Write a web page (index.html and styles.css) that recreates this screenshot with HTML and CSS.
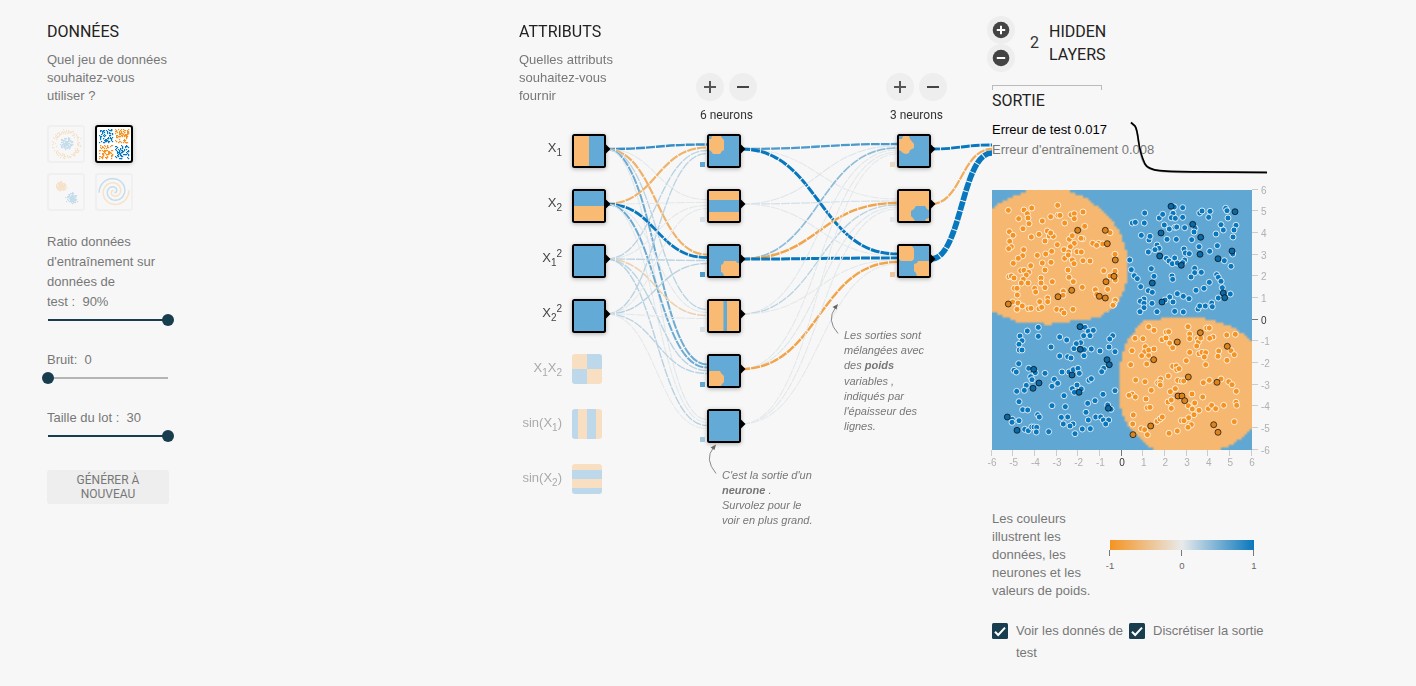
FILE: index.html
```html
<!DOCTYPE html>
<html lang="fr">
<head>
<meta charset="utf-8">
<title>Réseau de neurones</title>
<link rel="stylesheet" href="styles.css">
</head>
<body>
<main class="playground">
  <section class="data">
    <h4 class="title">Données</h4>
    <p class="intro">Quel jeu de données souhaitez-vous utiliser ?</p>
    <div class="datasets">
      <svg class="dataset" id="set-circle" viewBox="0 0 34 34"></svg>
      <svg class="dataset selected" id="set-xor" viewBox="0 0 34 34"></svg>
      <svg class="dataset" id="set-gauss" viewBox="0 0 34 34"></svg>
      <svg class="dataset" id="set-spiral" viewBox="0 0 34 34"></svg>
    </div>
    <div class="control ratio">
      <label>Ratio données d'entraînement sur données de<br>test&nbsp;:&nbsp; 90%</label>
      <div class="slider full"><span class="thumb"></span></div>
    </div>
    <div class="control noise">
      <label>Bruit:&nbsp; 0</label>
      <div class="slider"><span class="thumb"></span></div>
    </div>
    <div class="control batch">
      <label>Taille du lot&nbsp;:&nbsp; 30</label>
      <div class="slider full"><span class="thumb"></span></div>
    </div>
    <button class="regenerate">Générer à nouveau</button>
  </section>

  <section class="features">
    <h4 class="title">Attributs</h4>
    <p class="intro">Quelles attributs souhaitez-vous fournir</p>
    <div class="network">
      <svg id="net" width="473" height="530" viewBox="519 0 473 530"></svg>
      <div class="layer-controls first">
        <div class="buttons"><span class="round plus"></span><span class="round minus"></span></div>
        <div class="count">6 neurons</div>
      </div>
      <div class="layer-controls second">
        <div class="buttons"><span class="round plus"></span><span class="round minus"></span></div>
        <div class="count">3 neurons</div>
      </div>
      <p class="callout weights">Les sorties sont mélangées avec des <b>poids</b> variables&nbsp;, indiqués par l'épaisseur des lignes.</p>
      <p class="callout neuron">C'est la sortie d'un <b>neurone</b>&nbsp;.<br>Survolez pour le voir en plus grand.</p>
    </div>
  </section>

  <section class="output">
    <div class="layers">
      <div class="layer-buttons">
        <svg class="layer-button" viewBox="0 0 28 28"><circle cx="14" cy="14" r="8.3"/><path d="M9.8 14h8.4M14 9.8v8.4"/></svg>
        <svg class="layer-button" viewBox="0 0 28 28"><circle cx="14" cy="14" r="8.3"/><path d="M9.8 14h8.4"/></svg>
      </div>
      <span class="layer-count">2</span>
      <span class="layer-label">Hidden layers</span>
    </div>
    <div class="bracket"></div>
    <h4 class="title">Sortie</h4>
    <div class="metrics">
      <div class="errors">
        <div class="test">Erreur de test 0.017</div>
        <div class="train">Erreur d'entraînement 0.008</div>
      </div>
      <svg class="linechart" width="138" height="56" viewBox="1130 120 138 56">
        <path class="train-line" d="M1131 122.5L1135 126Q1137 129 1139 145T1146 166Q1149 170 1162 171.3T1200 172.3L1267 172.9"/>
        <path class="test-line" d="M1131 122.5L1135 126Q1137 129 1138.500 141T1145 164Q1148 169.500 1160 170.600T1200 171.8L1267 172.3"/>
      </svg>
    </div>
    <div class="heatmap">
      <canvas id="heat" width="100" height="100"></canvas>
      <svg id="points" width="285" height="285" viewBox="-5 0 285 285"></svg>
    </div>
    <div class="legend">
      <p>Les couleurs illustrent les données, les neurones et les valeurs de poids.</p>
      <div class="scale">
        <div class="gradient"></div>
        <div class="ticks"><i></i><i></i><i></i></div>
        <div class="values"><span>-1</span><span>0</span><span>1</span></div>
      </div>
    </div>
    <div class="options">
      <svg class="check" viewBox="0 0 16 16"><rect width="16" height="16" rx="1.5"/><path d="M3 8.700L6.200 12L13 4.600"/></svg>
      <span class="show-test">Voir les donnés de test</span>
      <svg class="check" viewBox="0 0 16 16"><rect width="16" height="16" rx="1.5"/><path d="M3 8.700L6.200 12L13 4.600"/></svg>
      <span class="discretize">Discrétiser la sortie</span>
    </div>
  </section>
</main>
<script src="main.js"></script>
</body>
</html>
```
FILE: styles.css
```css
body { margin: 0; background: #f7f7f7; color: #777; font: 13px/18px "Liberation Sans", Arial, sans-serif; }
p { margin: 0; }
.playground { display: flex; height: 686px; box-sizing: border-box; padding: 20px 0 0 47px; overflow: hidden; }
.title { margin: 0; font: 400 16px/23px Roboto, sans-serif; color: #222; text-transform: uppercase; }
.data { width: 122px; margin-right: 350px; flex: none; }
.intro { width: 122px; margin-top: 8px; }
.features { width: 473px; flex: none; position: relative; }
.features .intro { width: 100px; }

.datasets { display: grid; grid-template-columns: 38px 38px; gap: 10px; margin-top: 20px; }
.dataset { width: 34px; height: 34px; border: 2px solid #d8d8d8; border-radius: 3px; opacity: .2; }
.dataset.selected { opacity: 1; border-color: #000; background: #fff; box-shadow: 0 1px 5px rgba(0,0,0,.2); }

.control label { display: block; line-height: 20px; }
.ratio { margin-top: 21px; }
.noise { margin-top: 23px; }
.batch { margin-top: 23px; }
.slider { height: 15px; width: 120px; margin-left: 1px; display: flex; align-items: center; background: linear-gradient(#b5b5b5, #b5b5b5) left 0 top 7px / 100% 2px no-repeat; }
.slider.full { justify-content: flex-end; background-image: linear-gradient(#183d4e, #183d4e); }
.thumb { width: 12px; height: 12px; margin: 1px -6px 0; border-radius: 50%; background: #183d4e; }
.regenerate { display: block; width: 122px; height: 34px; margin-top: 27px; padding: 0 16px; border: 0; border-radius: 3px; background: #eee; color: #777; font: 400 12px/14px Roboto, sans-serif; text-transform: uppercase; }

.network { position: absolute; left: 0; top: -20px; width: 473px; height: 530px; }
.network svg { display: block; }
.layer-controls { position: absolute; top: 73px; width: 61px; }
.layer-controls.first { left: 177px; }
.layer-controls.second { left: 367px; }
.buttons { display: flex; gap: 5px; }
.round { width: 28px; height: 28px; border-radius: 50%; flex: none; background: linear-gradient(#444, #444) center / 12px 2px no-repeat #eee; }
.round.plus { background: linear-gradient(#555, #555) center / 12px 2px no-repeat, linear-gradient(#555, #555) center / 2px 12px no-repeat #eee; }
.count { margin-top: 5px; text-align: center; color: #333; font: 12px/18px Roboto, sans-serif; }
.callout { position: absolute; font-size: 11px; line-height: 15.2px; font-style: italic; }
.weights { left: 325px; top: 328px; width: 86px; }
.neuron { left: 203px; top: 468px; width: 98px; line-height: 15px; }

.output { width: 285px; flex: none; }
.layers { display: flex; align-items: flex-start; margin: -4px 0 0 -5px; height: 69px; color: #333; font: 400 16px/23px Roboto, sans-serif; }
.layer-buttons { display: grid; }
.layer-button { width: 28px; height: 28px; border-radius: 50%; background: #eee; }
.layer-button circle { fill: #444; }
.layer-button path { stroke: #fff; stroke-width: 2; }
.layer-count { margin: 15px 0 0 15px; }
.layer-label { width: 70px; margin: 4px 0 0 10px; text-transform: uppercase; color: #222; }
.bracket { width: 108px; height: 4px; border: 1px solid #bbb; border-bottom: 0; }
.output .title { margin-top: -1px; }
.metrics { display: flex; height: 78px; line-height: 20px; }
.errors { width: 138px; padding-top: 8px; white-space: nowrap; }
.test { color: #000; }
.linechart { flex: none; margin-top: 8px; }
.linechart path { fill: none; stroke-width: 1.7; }
.linechart .train-line { stroke: #aaa; }
.linechart .test-line { stroke: #000; }
.heatmap { display: grid; height: 260px; }
.heatmap > * { grid-area: 1 / 1; }
#heat { width: 260px; height: 260px; }
#points { margin-left: -5px; overflow: visible; }
.axis text { font: 10px "Liberation Sans", Arial, sans-serif; fill: #b0b0b0; }
.axis path { stroke: #ccc; }
.axis .zero text { fill: #333; }
.axis .zero path { stroke: #777; }
.legend { display: flex; margin-top: 60px; }
.legend p { width: 118px; }
.scale { width: 144px; padding-top: 30px; color: #666; font-size: 9.5px; line-height: 12px; }
.gradient { height: 10px; background: linear-gradient(90deg, #f59322, #e8eaeb, #0877bd); }
.ticks { display: flex; justify-content: space-between; margin: 0 0 0 -1px; }
.ticks i { width: 1px; height: 6px; background: #777; }
.values { display: flex; justify-content: space-between; margin: 4px -8px 0; }
.values span { width: 16px; text-align: center; }
.options { display: flex; margin-top: 20px; line-height: 22px; align-items: flex-start; }
.check { width: 16px; height: 16px; margin-top: 3px; flex: none; }
.check rect { fill: #183d4e; }
.check path { fill: none; stroke: #fff; stroke-width: 2; }
.show-test { flex: none; width: 110px; margin: 0 3px 0 8px; }
.discretize { margin-left: 8px; white-space: nowrap; }

.link { fill: none; stroke-dasharray: 9 1; }
.node { filter: drop-shadow(0 1px 2px rgba(0,0,0,.3)); }
.inactive { opacity: .4; }
.feature-label { font: 13px "Liberation Sans", Arial, sans-serif; fill: #444; text-anchor: end; }
.feature-label.off { fill: #aaa; }
.feature-label .small { font-size: 10px; }
.curve { fill: none; stroke: #888; stroke-width: 1; }
.tip { fill: #666; }
```
FILE: main.js
```js
const ORANGE = '#f59322', BLUE = '#0877bd';
const TILE_ORANGE = '#f9bb74', TILE_BLUE = '#64aad6';
const get = id => document.getElementById(id);

let seed = 7;
function random() {
  seed = (seed * 16807) % 2147483647;
  return seed / 2147483647;
}
function normal() {
  return (random() + random() + random() + random() - 2) * 1.1;
}
function colorOf(w) {
  const t = Math.min(1, Math.abs(w));
  const mid = [232, 234, 235], end = w < 0 ? [245, 147, 34] : [8, 119, 189];
  return 'rgb(' + mid.map((m, i) => Math.round(m + (end[i] - m) * t)).join(',') + ')';
}

// Dataset thumbnails
function dots(list) {
  return list.map(([x, y, c]) => `<rect x="${Math.round(x)}" y="${Math.round(y)}" width="1.2" height="1.2" fill="${c}"/>`).join('');
}
const ring = [], xor = [], gauss = [], spiral = [];
for (let i = 0; i < 130; i++) {
  let a = random() * 6.283, r = random() * 6.5;
  ring.push([17 + r * Math.cos(a), 16.5 + r * Math.sin(a), BLUE]);
  a = random() * 6.283; r = 10.5 + random() * 4;
  ring.push([17 + r * Math.cos(a), 16.5 + r * Math.sin(a), ORANGE]);
  gauss.push([11.5 + normal() * 3.2, 11 + normal() * 3.2, ORANGE], [22.5 + normal() * 3.2, 22.5 + normal() * 3.2, BLUE]);
}
for (let i = 0; i < 320; i++) {
  const right = random() > .5, low = random() > .5;
  xor.push([(right ? 18 : 2) + random() * 13.4, (low ? 18 : 2) + random() * 13.4, right === low ? BLUE : ORANGE]);
}
function arm(phase, color) {
  let d = '';
  for (let i = 0; i <= 90; i++) {
    const t = i / 90, a = phase - t * 10.6, r = 1 + t * 14;
    d += (i ? 'L' : 'M') + (17 + r * Math.cos(a)).toFixed(1) + ' ' + (16.5 + r * Math.sin(a)).toFixed(1);
  }
  return `<path d="${d}" fill="none" stroke="${color}" stroke-width="1.5"/>`;
}
get('set-circle').innerHTML = dots(ring);
get('set-xor').innerHTML = dots(xor);
get('set-gauss').innerHTML = dots(gauss);
get('set-spiral').innerHTML = arm(1.1, BLUE) + arm(4.24, ORANGE);

// Network
const centers = i => 149 + 55 * i;
const weights1 = [
  [.8, .03, -.65, .2, .55, .04],
  [-.65, .02, 1, .03, .55, .03],
  [.2, .03, .2, -.3, .2, .22],
  [.2, .02, .22, .03, .2, .02]
];
const weights2 = [
  [.7, .02, 1.15], [.05, .1, .03], [.4, -.8, 1.1],
  [.03, .2, .02], [.03, .04, -.8], [.02, .03, .02]
];
const weights3 = [[1], [-.7], [2.6]];
function links(weights, sx, tx, targetY) {
  const n = weights.length, mid = (sx + tx) / 2;
  return weights.map((row, i) => row.map((w, j) => {
    const sy = centers(i), ty = targetY(j) + (i - (n - 1) / 2) / n * 12;
    return `<path class="link" d="M${sx} ${sy}C${mid} ${sy} ${mid} ${ty} ${tx} ${ty}" stroke="${colorOf(w)}" stroke-width="${1 + Math.abs(w) * 1.8}"/>`;
  }).join('')).join('');
}
function shape(points, color) { return `<polygon points="${points}" fill="${color}"/>`; }
function box(x, y, w, h, color) { return `<rect x="${x}" y="${y}" width="${w}" height="${h}" fill="${color}"/>`; }
const O = TILE_ORANGE, B = TILE_BLUE;
function node(x, i, base, content) {
  const y = 134 + 55 * i;
  return `<g class="node" transform="translate(${x} ${y})"><rect width="34" height="34" rx="2.5"/><g transform="translate(2 2)">${box(0, 0, 30, 30, base)}${content}</g></g>` +
    shape(`${x + 34},${y + 10.5} ${x + 38.500},${y + 15} ${x + 34},${y + 19.5}`, '#000');
}
function bias(x, i, w) { return box(x, 162 + 55 * i, 5, 5, colorOf(w)); }
function inactive(i, content) {
  return `<g class="inactive" transform="translate(572 ${134 + 55 * i})" clip-path="url(#tile)">${content}</g>`;
}
function label(i, html, off) {
  return `<text class="feature-label${off ? ' off' : ''}" x="562" y="${152 + 55 * i}">${html}</text>`;
}
const sub = n => `<tspan class="small" dy="4">${n}</tspan>`;
const up = '<tspan class="small" dy="-9">2</tspan>';
get('net').innerHTML =
  '<defs><clipPath id="tile"><rect width="30" height="30" rx="3"/></clipPath></defs>' +
  links(weights1, 606, 707, centers) + links(weights2, 741, 897, centers) + links(weights3, 931, 992, () => 149) +
  label(0, 'X' + sub(1)) + label(1, 'X' + sub(2)) + label(2, 'X' + sub(1) + up) + label(3, 'X' + sub(2) + up) +
  label(4, 'X' + sub(1) + '<tspan dy="-4">X</tspan>' + sub(2), true) +
  label(5, 'sin(X' + sub(1) + '<tspan dy="-4">)</tspan>', true) + label(6, 'sin(X' + sub(2) + '<tspan dy="-4">)</tspan>', true) +
  node(572, 0, B, box(0, 0, 15, 30, O)) + node(572, 1, B, box(0, 15, 30, 15, O)) + node(572, 2, B, '') + node(572, 3, B, '') +
  inactive(4, box(0, 0, 30, 30, B) + box(0, 0, 15, 15, O) + box(15, 15, 15, 15, O)) +
  inactive(5, box(0, 0, 30, 30, B) + box(6, 0, 9, 30, O) + box(24, 0, 6, 30, O)) +
  inactive(6, box(0, 0, 30, 30, B) + box(0, 0, 30, 6, O) + box(0, 15, 30, 9, O)) +
  node(707, 0, B, shape('3,0 12,0 13,2 15,4 15,14 13,15 11,18 4,18 2,15 0,14 0,3 2,3', O)) +
  node(707, 1, O, box(0, 9, 30, 12, B)) +
  node(707, 2, B, shape('15,15 27,15 28,17 30,17 30,30 15,30 14,27 12,26 12,19 14,18', O)) +
  node(707, 3, O, box(14.5, 0, 3.5, 30, B)) +
  node(707, 4, B, shape('0,15 11,15 12,17 15,20 15,26 13,28 12,30 0,30', O)) +
  node(707, 5, B, '') +
  node(897, 0, B, shape('4,0 10,0 11,3 15,8 15,12 11,14 10,17 7,18 4,17 2,15 0,14 0,3 3,3', O)) +
  node(897, 1, O, shape('17,15 26,15 28,18 30,19 30,27 27,28 26,30 16,30 14,27 12,25 12,20 15,18', B)) +
  node(897, 2, B, shape('0,0 13,0 15,3 15,13 13,15 2,15 0,13', O) + shape('19,15 30,15 30,30 18,30 17,27 15,25 15,18 18,17', O)) +
  [.6, .08, .7, .08, .6, .3].map((w, i) => bias(700, i, w)).join('') +
  [-.2, .02, -.4].map((w, i) => bias(890, i, w)).join('') +
  '<path class="curve" d="M716 473.500Q704 459 713.500 447.500"/><path class="tip" d="M716 444.500L710.500 447.500L714.500 450Z"/>' +
  '<path class="curve" d="M838 333.500Q826 320 835.500 307.500"/><path class="tip" d="M838 304L832.500 307L836.500 309.500Z"/>';

// Decision regions, in thirds of a pixel from the given origin
const regions = [
  { ox: -7, oy: -7, p: [21,80, 40,62, 65,50, 100,35, 130,21, 250,21, 275,33, 300,43, 330,65, 360,90, 385,120, 405,150, 420,190, 428,220, 428,290, 420,312, 405,350, 385,370, 350,400, 300,412, 250,415, 205,418, 195,425, 182,425, 170,418, 100,417, 60,402, 21,385] },
  { ox: 128, oy: 130, p: [45,30, 58,14, 75,1, 100,0, 125,-5, 155,-8, 235,-8, 260,-3, 300,7, 345,24, 370,42, 396,62, 396,328, 370,350, 340,372, 290,392, 108,392, 85,378, 60,355, 35,330, 20,310, 5,280, -3,240, -3,150, 5,110, 20,65] }
];
const ctx = get('heat').getContext('2d');
const image = ctx.createImageData(100, 100);
function inside(x, y, r) {
  let hit = false;
  for (let i = 0, j = r.p.length - 2; i < r.p.length; j = i, i += 2) {
    const xi = r.p[i] / 3 + r.ox, yi = r.p[i + 1] / 3 + r.oy, xj = r.p[j] / 3 + r.ox, yj = r.p[j + 1] / 3 + r.oy;
    if ((yi > y) !== (yj > y) && x < (xj - xi) * (y - yi) / (yj - yi) + xi) hit = !hit;
  }
  return hit;
}
for (let row = 0; row < 100; row++) for (let col = 0; col < 100; col++) {
  const x = col * 2.6 + 1.3, y = row * 2.6 + 1.3;
  const color = regions.some(r => inside(x, y, r)) ? [246, 184, 113] : [97, 167, 211];
  image.data.set([...color, 255], (row * 100 + col) * 4);
}
ctx.putImageData(image, 0, 0);

// Samples, same units as the regions; "test" points are outlined in black
const samples = [
  { ox: -7, oy: -7, color: ORANGE, dark: '#d9841f',
    train: [70,82, 117,81, 140,75, 218,67, 101,107, 127,92, 129,105, 132,122, 172,114, 197,101, 219,97, 225,97, 239,120, 258,95, 268,92, 268,107, 294,87, 299,130, 114,137, 73,146, 84,157, 74,175, 79,191, 71,197, 139,162, 162,154, 187,144, 193,159, 205,160, 197,150, 180,174, 253,169, 262,158, 293,167, 288,166, 268,181, 256,191, 217,185, 323,181, 341,181, 335,187, 353,183, 375,149, 390,214, 116,200, 113,218, 100,226, 85,241, 157,217, 182,213, 200,205, 237,200, 251,207, 239,226, 250,216, 262,231, 267,242, 276,206, 289,207, 294,233, 315,234, 137,248, 172,240, 198,238, 180,261, 249,261, 107,263, 117,262, 131,268, 124,276, 115,289, 129,300, 109,300, 72,281, 79,279, 87,285, 168,285, 168,300, 202,296, 252,283, 265,296, 180,314, 356,263, 390,265, 375,279, 391,291, 292,313, 331,320, 335,334, 368,319, 88,316, 96,316, 97,336, 149,316, 152,327, 188,345, 235,325, 234,337, 164,356, 188,356, 83,357, 99,360, 112,369, 96,379, 130,377, 138,376, 162,377, 170,373, 215,379, 230,382, 237,390, 264,379, 391,352, 387,363, 384,367],
    test: [278,142, 361,142, 367,182, 391,231, 387,280, 363,296, 343,340, 361,345, 260,322, 219,341, 70,363] },
  { ox: 128, oy: -7, color: BLUE, dark: '#0b68a3',
    train: [74,90, 37,120, 46,118, 73,120, 118,105, 128,94, 133,126, 159,91, 154,104, 166,106, 163,72, 188,74, 188,103, 148,138, 165,133, 170,132, 194,134, 225,136, 222,147, 215,170, 169,169, 141,169, 87,171, 90,160, 64,157, 111,186, 117,196, 105,200, 85,207, 239,90, 246,84, 270,85, 266,103, 317,76, 321,83, 324,105, 303,125, 348,127, 342,141, 310,141, 288,153, 339,162, 292,188, 269,205, 237,191, 192,198, 196,210, 208,212, 164,225, 139,226, 147,234, 157,242, 172,240, 194,231, 188,239, 338,213, 313,233, 333,250, 29,231, 34,260, 43,278, 52,287, 94,257, 102,280, 62,311, 85,323, 97,328, 156,279, 158,289, 224,256, 224,269, 244,268, 213,282, 290,275, 295,283, 303,295, 268,298, 307,314, 252,316, 228,322, 331,333, 172,332, 149,342, 190,340, 207,347, 135,351, 159,357, 72,348, 61,355, 72,361, 96,361, 72,374, 60,386, 111,386, 164,385, 190,387, 234,378, 239,369, 256,369, 275,360, 277,371, 295,345],
    test: [153,70, 345,86, 218,124, 123,150, 242,163, 336,204, 240,214, 119,219, 294,227, 184,247, 97,300, 310,330, 314,344, 126,357] },
  { ox: -7, oy: 130, color: BLUE, dark: '#0b68a3',
    train: [127,33, 160,22, 160,49, 105,48, 111,62, 102,73, 103,90, 111,90, 198,81, 224,51, 245,60, 300,22, 310,34, 325,31, 296,47, 315,47, 383,47, 374,57, 287,68, 274,71, 267,86, 298,89, 319,87, 345,93, 372,81, 390,95, 224,108, 248,110, 258,114, 297,107, 101,131, 87,151, 94,156, 131,145, 151,158, 180,160, 137,170, 141,179, 124,196, 118,211, 95,214, 231,156, 252,156, 265,149, 279,145, 283,160, 356,145, 350,155, 312,181, 319,176, 208,178, 218,190, 201,199, 276,195, 262,206, 289,207, 268,217, 237,227, 354,223, 390,212, 102,245, 113,269, 128,270, 158,284, 163,291, 201,257, 241,260, 308,250, 330,242, 368,255, 378,268, 303,277, 82,298, 81,307, 102,302, 229,292, 248,291, 310,300, 332,291, 347,291, 355,300, 371,300, 362,312, 235,312, 264,312, 255,318, 292,327, 316,326, 270,341, 119,328, 130,332, 140,321, 147,321, 155,322, 154,336, 191,335],
    test: [285,20, 286,88, 366,119, 373,134, 146,148, 162,189, 144,205, 261,165, 282,217, 370,265, 67,291, 96,331] },
  { ox: 128, oy: 130, color: ORANGE, dark: '#d9841f',
    train: [86,20, 102,31, 139,36, 146,35, 204,20, 260,24, 268,24, 45,55, 69,56, 126,59, 138,54, 149,69, 158,83, 209,42, 209,56, 232,56, 235,66, 230,78, 242,54, 279,51, 269,55, 320,45, 346,43, 36,92, 76,80, 74,95, 65,107, 86,106, 86,90, 102,87, 237,101, 246,97, 257,98, 253,111, 209,97, 199,122, 296,93, 294,109, 333,92, 343,104, 321,121, 257,134, 32,134, 80,132, 158,139, 169,138, 170,149, 177,146, 145,168, 47,180, 75,185, 122,177, 113,188, 120,188, 121,195, 173,181, 184,183, 191,183, 250,188, 268,181, 303,177, 326,185, 336,194, 349,214, 166,206, 151,215, 94,211, 36,222, 27,226, 46,231, 78,237, 144,246, 154,240, 154,265, 216,222, 248,231, 224,249, 205,257, 217,267, 237,271, 222,284, 265,266, 275,256, 287,266, 311,256, 348,247, 350,256, 82,263, 90,262, 40,285, 38,312, 111,304, 120,297, 127,291, 184,302, 192,302, 206,293, 214,314, 204,322, 172,333, 147,340, 64,326, 74,329, 82,344, 343,305],
    test: [241,38, 172,66, 322,79, 101,119, 205,171, 291,187, 174,228, 186,228, 194,242, 92,318, 39,344, 281,314, 294,337] }
];
function circles(s, list, fill, stroke, radius) {
  let out = '';
  for (let i = 0; i < list.length; i += 2)
    out += `<circle cx="${(list[i] / 3 + s.ox).toFixed(1)}" cy="${(list[i + 1] / 3 + s.oy).toFixed(1)}" r="${radius}" fill="${fill}" stroke="${stroke}"/>`;
  return out;
}
let axis = '';
for (let v = -6; v <= 6; v++) {
  const x = (v + 6) / 12 * 260, y = 260 - x, cls = v === 0 ? 'zero' : '';
  axis += `<g class="${cls}"><path d="M${Math.floor(x) - .5} 260v6"/><text x="${x}" y="276" text-anchor="middle">${v}</text>` +
    `<path d="M260 ${Math.floor(y) - .5}h6"/><text x="269" y="${y + 3.5}">${v}</text></g>`;
}
get('points').innerHTML = `<g class="axis">${axis}</g>` +
  samples.map(s => circles(s, s.train, s.color, 'rgba(255,255,255,.8)', 3)).join('') +
  samples.map(s => circles(s, s.test, s.dark, 'rgba(0,0,0,.65)', 3)).join('');
```
